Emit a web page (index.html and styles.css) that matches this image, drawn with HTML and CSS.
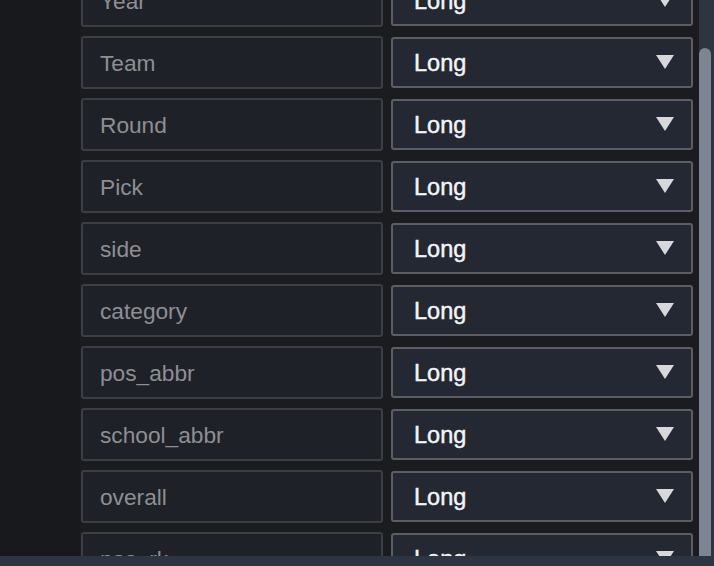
FILE: index.html
```html
<!DOCTYPE html>
<html>
<head>
<meta charset="utf-8">
<link rel="stylesheet" href="styles.css">
</head>
<body>
<div class="app">
  <div class="frame">
    <aside class="sidebar"></aside>
    <main class="main">
      <div class="list">
        <div class="row"><div class="field">Year</div><div class="select"><span>Long</span><svg class="arrow" width="18" height="14" viewBox="0 0 18 14"><path d="M0 0H18L9 14Z"/></svg></div></div>
        <div class="row"><div class="field">Team</div><div class="select"><span>Long</span><svg class="arrow" width="18" height="14" viewBox="0 0 18 14"><path d="M0 0H18L9 14Z"/></svg></div></div>
        <div class="row"><div class="field">Round</div><div class="select"><span>Long</span><svg class="arrow" width="18" height="14" viewBox="0 0 18 14"><path d="M0 0H18L9 14Z"/></svg></div></div>
        <div class="row"><div class="field">Pick</div><div class="select"><span>Long</span><svg class="arrow" width="18" height="14" viewBox="0 0 18 14"><path d="M0 0H18L9 14Z"/></svg></div></div>
        <div class="row"><div class="field">side</div><div class="select"><span>Long</span><svg class="arrow" width="18" height="14" viewBox="0 0 18 14"><path d="M0 0H18L9 14Z"/></svg></div></div>
        <div class="row"><div class="field">category</div><div class="select"><span>Long</span><svg class="arrow" width="18" height="14" viewBox="0 0 18 14"><path d="M0 0H18L9 14Z"/></svg></div></div>
        <div class="row"><div class="field">pos_abbr</div><div class="select"><span>Long</span><svg class="arrow" width="18" height="14" viewBox="0 0 18 14"><path d="M0 0H18L9 14Z"/></svg></div></div>
        <div class="row"><div class="field">school_abbr</div><div class="select"><span>Long</span><svg class="arrow" width="18" height="14" viewBox="0 0 18 14"><path d="M0 0H18L9 14Z"/></svg></div></div>
        <div class="row"><div class="field">overall</div><div class="select"><span>Long</span><svg class="arrow" width="18" height="14" viewBox="0 0 18 14"><path d="M0 0H18L9 14Z"/></svg></div></div>
        <div class="row"><div class="field">pos_rk</div><div class="select"><span>Long</span><svg class="arrow" width="18" height="14" viewBox="0 0 18 14"><path d="M0 0H18L9 14Z"/></svg></div></div>
      </div>
    </main>
    <div class="scrollbar"><div class="thumb"></div></div>
  </div>
  <div class="statusbar"></div>
</div>
</body>
</html>
```

FILE: styles.css
```css
html, body {
  margin: 0;
  padding: 0;
  width: 714px;
  height: 566px;
  overflow: hidden;
  background: #1b1c20;
  font-family: "Liberation Sans", Arial, sans-serif;
}

.app {
  display: flex;
  flex-direction: column;
  height: 566px;
}

.frame {
  display: flex;
  flex: 1;
  min-height: 0;
}

.sidebar {
  width: 80px;
  flex: none;
  background: #18191d;
}

.main {
  flex: 1;
  min-width: 0;
  overflow: hidden;
  padding-left: 1px;
  background: #1b1c20;
}

.list {
  display: flex;
  flex-direction: column;
  gap: 9px;
  margin-top: -26px;
}

.row {
  display: flex;
  align-items: center;
  gap: 8px;
  height: 53px;
}

.field {
  box-sizing: border-box;
  width: 302px;
  height: 53px;
  display: flex;
  align-items: center;
  padding: 1px 0 0 17px;
  border: 2px solid #3c3e44;
  border-radius: 3px;
  background: #1e2128;
  color: #8e8f93;
  font-size: 22.7px;
}

.select {
  box-sizing: border-box;
  width: 302px;
  height: 51px;
  display: flex;
  align-items: center;
  justify-content: space-between;
  padding: 2px 17px 0 21px;
  border: 2px solid #5c5e63;
  border-radius: 3px;
  background: #232833;
  color: #f4f4f5;
  font-size: 23.5px;
  -webkit-text-stroke: 0.45px #f4f4f5;
}

.arrow {
  fill: #d8d8da;
  margin-top: -3px;
}

.scrollbar {
  width: 15px;
  flex: none;
  background: #2e3542;
  padding-top: 48px;
  box-sizing: border-box;
}

.thumb {
  width: 12px;
  height: 600px;
  border-radius: 6px;
  background: #7b8594;
}

.statusbar {
  height: 10px;
  flex: none;
  background: #2e3542;
}
```
